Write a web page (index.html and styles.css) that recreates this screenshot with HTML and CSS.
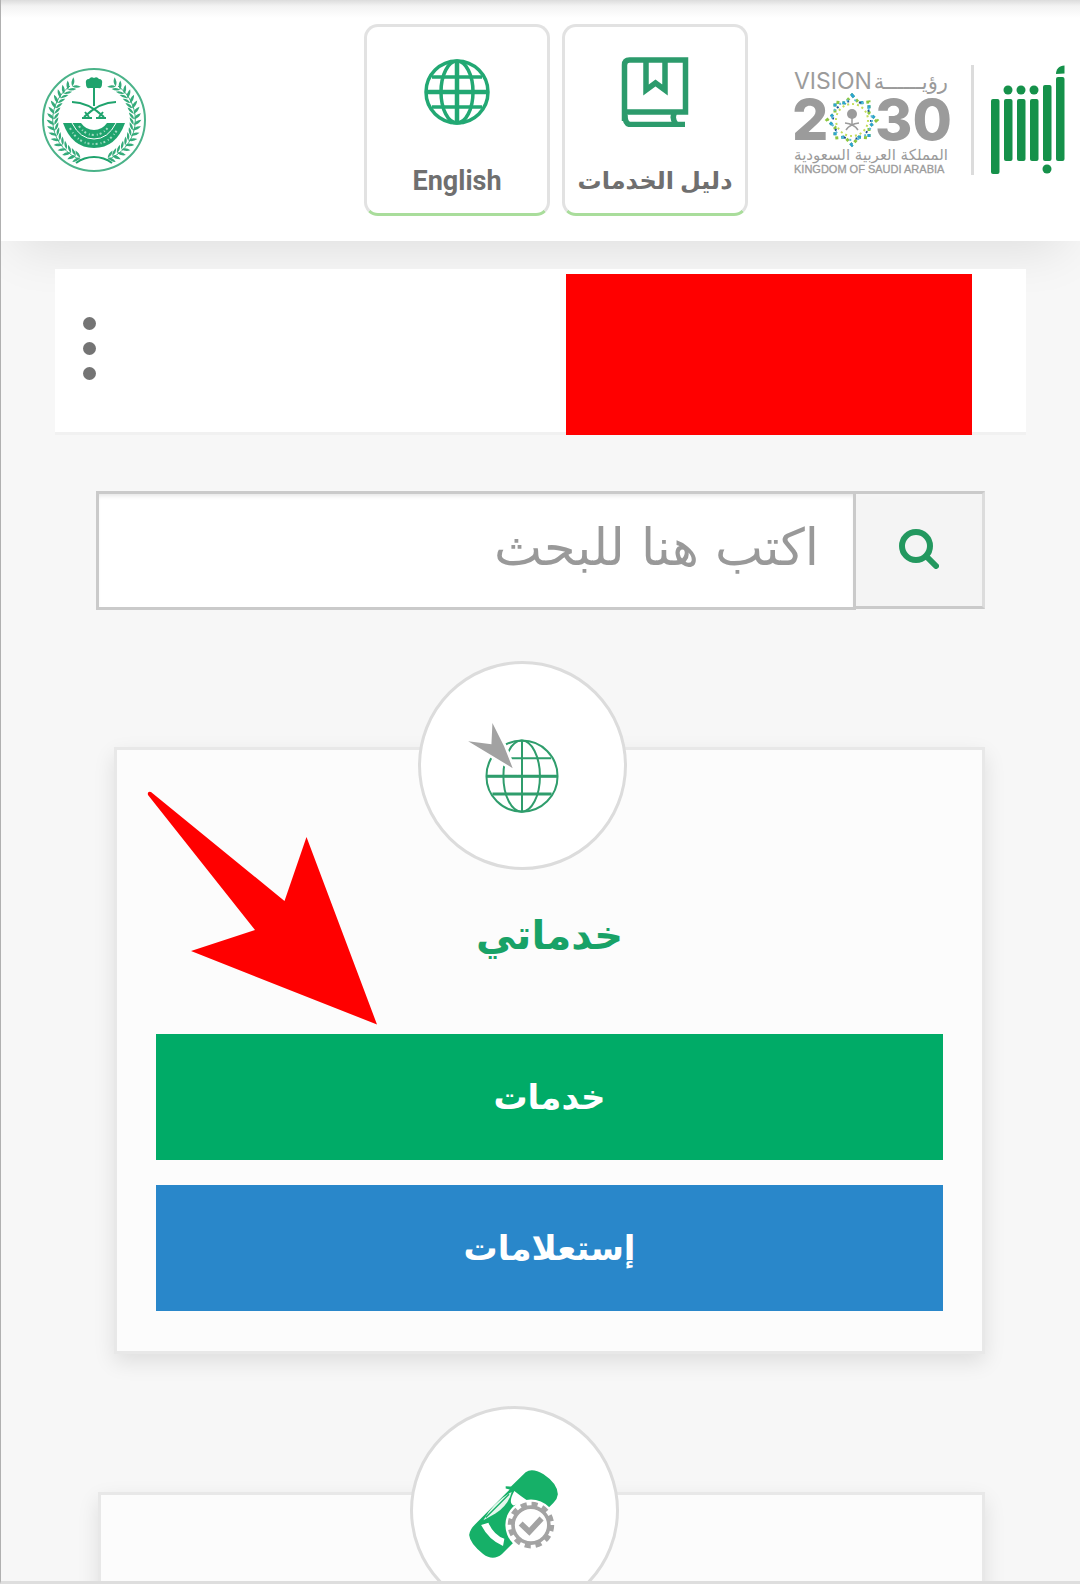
FILE: index.html
```html
<!DOCTYPE html>
<html lang="ar" dir="rtl">
<head>
<meta charset="utf-8">
<meta name="viewport" content="width=device-width, initial-scale=1">
<title>أبشر</title>
<link rel="stylesheet" href="styles.css">
</head>
<body>
<div class="page">
  <header class="header">
    <div class="brand">
      <svg class="absher" viewBox="0 0 74 110" role="img" aria-label="أبشر">
        <g fill="#15914a">
          <rect x="0" y="34" width="8.500" height="75" rx="2"/>
          <rect x="13" y="34" width="8.500" height="62" rx="2"/>
          <rect x="26" y="34" width="8.500" height="62" rx="2"/>
          <rect x="39" y="34" width="8.500" height="62" rx="2"/>
          <rect x="52" y="20" width="8.500" height="76" rx="2"/>
          <rect x="65" y="12" width="8.500" height="84" rx="2"/>
          <circle cx="17" cy="25" r="4.500"/><circle cx="30" cy="25" r="4.500"/><circle cx="43" cy="25" r="4.500"/>
          <circle cx="56" cy="104" r="4.500"/>
          <path d="M65 9c0-5 3-8 8.500-8.500V8.500z"/>
        </g>
      </svg>
      <span class="brand-line"></span>
      <svg class="vision" viewBox="0 0 160 110" direction="ltr" role="img" aria-label="Vision 2030">
        <g fill="#9b9b9b">
          <text class="v-name" x="0" y="24">VISION</text>
          <text class="v-ar" x="154" y="24" direction="rtl">رؤيــــــة</text>
          <text class="v-num" x="-2" y="75">2</text>
          <text class="v-num" x="81" y="75">30</text>
          <text class="v-king-ar" x="154" y="95" direction="rtl">المملكة العربية السعودية</text>
          <text class="v-king" x="0" y="108">KINGDOM OF SAUDI ARABIA</text>
        </g>
        <g transform="translate(58 55)">
          <g fill="none" stroke-width="3">
            <path stroke="#8cc63f" stroke-dasharray="3 3" d="M0-25 7-17 17-18 17-7 25 0 17 7 17 18 7 17 0 25-7 17-17 18-17 7-25 0-17-7-17-18-7-17z"/>
            <path stroke="#2ba3d4" stroke-dasharray="3 9" d="M0-25 7-17 17-18 17-7 25 0 17 7 17 18 7 17 0 25-7 17-17 18-17 7-25 0-17-7-17-18-7-17z"/>
          </g>
          <g fill="none" stroke-width="2">
            <circle r="16" stroke="#c3dc5a" stroke-dasharray="2 3"/>
            <circle r="19" stroke="#1d4f91" stroke-dasharray="2 10"/>
            <circle r="20" stroke="#5bb9d8" stroke-dasharray="2 6"/>
          </g>
          <circle cy="-6" r="5" fill="#9b9b9b"/>
          <path d="M0-4V6M-7 3Q2 4 6 10M7 3Q-2 4-6 10" fill="none" stroke="#9b9b9b" stroke-width="1.500"/>
        </g>
      </svg>
    </div>
    <nav class="actions">
      <a class="tile tile-ar" href="#guide">
        <svg class="tile-icon" viewBox="0 0 72 72" fill="none" stroke="#2c9b6c" stroke-width="5.500" aria-hidden="true">
          <path d="M5.500 66V10q0-5 5-5H66.500V57H5.500M6 60q0 9 5 9.500H66M56 57q-4 6 1 12"/>
          <path d="M27 5V35L36.500 28 46 35V5"/>
        </svg>
        <span>دليل الخدمات</span>
      </a>
      <a class="tile" href="#english" lang="en">
        <svg class="tile-icon" viewBox="0 0 72 72" fill="none" stroke="#22a873" stroke-width="3.500" aria-hidden="true">
          <circle cx="36" cy="37" r="31"/><ellipse cx="36" cy="37" rx="16" ry="31"/>
          <path d="M36 6V68M5 37H67" stroke-width="4.500"/><path d="M11 22H61M11 52H61"/>
        </svg>
        <span>English</span>
      </a>
    </nav>
    <svg class="emblem" viewBox="0 0 104 104" role="img" aria-label="وزارة الداخلية">
      <defs>
        <g id="leaf"><path d="M0 0Q-5-1-7-6Q-1-5 0 0M0 0Q4-2 5-7Q0-5 0 0" fill="#35ab7b"/></g>
        <g id="branch">
          <path d="M40 92A42 42 0 0 1 28 18" fill="none" stroke="#35ab7b"/>
          <use href="#leaf" transform="rotate(-160 52 52) translate(52 12) rotate(90)"/>
          <use href="#leaf" transform="rotate(-153 52 52) translate(52 12) rotate(90)"/>
          <use href="#leaf" transform="rotate(-145 52 52) translate(52 12) rotate(90)"/>
          <use href="#leaf" transform="rotate(-137 52 52) translate(52 12) rotate(90)"/>
          <use href="#leaf" transform="rotate(-129 52 52) translate(52 12) rotate(90)"/>
          <use href="#leaf" transform="rotate(-121 52 52) translate(52 12) rotate(90)"/>
          <use href="#leaf" transform="rotate(-113 52 52) translate(52 12) rotate(90)"/>
          <use href="#leaf" transform="rotate(-105 52 52) translate(52 12) rotate(90)"/>
          <use href="#leaf" transform="rotate(-97 52 52) translate(52 12) rotate(90)"/>
          <use href="#leaf" transform="rotate(-89 52 52) translate(52 12) rotate(90)"/>
          <use href="#leaf" transform="rotate(-81 52 52) translate(52 12) rotate(90)"/>
          <use href="#leaf" transform="rotate(-73 52 52) translate(52 12) rotate(90)"/>
          <use href="#leaf" transform="rotate(-65 52 52) translate(52 12) rotate(90)"/>
          <use href="#leaf" transform="rotate(-57 52 52) translate(52 12) rotate(90)"/>
          <use href="#leaf" transform="rotate(-49 52 52) translate(52 12) rotate(90)"/>
          <use href="#leaf" transform="rotate(-41 52 52) translate(52 12) rotate(90)"/>
          <use href="#leaf" transform="rotate(-33 52 52) translate(52 12) rotate(90)"/>
        </g>
      </defs>
      <circle cx="52" cy="52" r="51" fill="none" stroke="#4bb389" stroke-width="2"/>
      <use href="#branch"/>
      <use href="#branch" transform="translate(104 0) scale(-1 1)"/>
      <g fill="none" stroke="#1fa36d" stroke-width="2">
        <path d="M52 18V38M30 34Q46 34 62 49M74 34Q58 34 42 49" />
        <path d="M34 95Q42 89 52 89T70 95M40 50H50M54 50H64M43 44l4 5M61 44l-4 5"/>
      </g>
      <path d="M52 10q3-2 5 1 4 0 3 5 0 5-4 4H48q-4 1-4-4-1-5 3-5 2-3 5-1z" fill="#1fa36d"/>
      <path d="M21 55H83Q74 80 52 80T21 55z" fill="#1fa36d"/>
      <path d="M30 55Q38 71 52 71T74 55" fill="none" stroke="#fff"/>
      <path d="M39 55Q44 62 52 62T65 55z" fill="#fff"/>
      <path d="M28 60Q36 76 52 76T76 60M37 58Q43 67 52 67T67 58" fill="none" stroke="#a6dcc4" stroke-width="2" stroke-dasharray="2 3 1 2"/>
    </svg>
  </header>

  <main>
    <section class="profile">
      <div class="profile-mask"></div>
      <button class="more" type="button" aria-label="المزيد"><i></i><i></i><i></i></button>
    </section>

    <form class="search" role="search">
      <button class="search-btn" type="submit" aria-label="بحث">
        <svg viewBox="0 0 40 40" fill="none" stroke="#23985f" stroke-linecap="round" aria-hidden="true">
          <circle cx="17" cy="17" r="14" stroke-width="6"/><path d="M28 28 37 37" stroke-width="6"/>
        </svg>
      </button>
      <input class="search-input" type="search" aria-label="بحث" placeholder="اكتب هنا للبحث">
    </form>

    <section class="card">
      <div class="badge-row"><div class="badge">
        <svg viewBox="200 188 330 316" aria-hidden="true">
          <g fill="none" stroke="#2f9d6c" stroke-width="6">
            <circle cx="365" cy="378" r="107"/><ellipse cx="364" cy="378" rx="55" ry="107"/>
            <path d="M365 271V485M278 324H453"/><path d="M258 378H472M276 432H454" stroke-width="9"/>
          </g>
          <path d="M203 273 273 282 276 218 311 288 337 354 273 315z" fill="#fff" stroke="#fff" stroke-width="16"/>
          <path d="M365 271V485M258 378H472" fill="none" stroke="#2f9d6c" stroke-width="6"/>
          <path d="M203 273 273 282 276 218 311 288 337 354 273 315z" fill="#a2a2a2"/>
        </svg>
      </div></div>
      <h2 class="card-title">خدماتي</h2>
      <div class="card-actions">
        <button class="btn btn-green" type="button">خدمات</button>
        <button class="btn btn-blue" type="button">إستعلامات</button>
      </div>
      <svg class="pointer" viewBox="0 0 231 235" aria-hidden="true">
        <path d="M4 1 137.500 110 159.500 46 230 233.500 44 160 108 139 1 4Q0 0 4 1z" fill="#f00"/>
      </svg>
    </section>

    <section class="card card-wide">
      <div class="badge-row"><div class="badge">
        <svg viewBox="236 203 330 316" aria-hidden="true">
          <path d="M266 435Q268 418 285 402L388 298 376 295V288L392 289 436 246Q456 232 490 252 532 280 533 312 532 325 520 338L365 492Q338 515 308 492 268 460 266 435z" fill="#16b068"/>
          <path d="M309 390Q340 335 394 305 384 345 345 370z" fill="#e6f7ed"/>
          <path d="M302 405 324 398Q340 435 372 446L368 468Q325 450 302 405zM402 302Q425 320 442 332L400 346Q382 338 402 302z" fill="#fff"/>
          <path d="M316 382 386 312" stroke="#16b068" stroke-width="4"/>
          <circle cx="452" cy="405" r="77" fill="#fff"/>
          <circle cx="452" cy="405" r="62" fill="none" stroke="#a3a3a3" stroke-width="16" stroke-dasharray="18 14.460"/>
          <circle cx="452" cy="405" r="54" fill="none" stroke="#a3a3a3" stroke-width="11"/>
          <path d="M421 400 447 425 484 385" fill="none" stroke="#a3a3a3" stroke-width="17"/>
        </svg>
      </div></div>
    </section>
  </main>
</div>
</body>
</html>
```

FILE: styles.css
```css
* { box-sizing: border-box; }

body {
  margin: 0;
  background: #f7f7f7;
  font-family: Roboto, "DejaVu Sans", sans-serif;
  color: #6f6f6f;
}

.page {
  height: 100vh;
  overflow: hidden;
  border-left: 1px solid #b0b0b0;
  border-bottom: 3px solid #dedede;
}

.header {
  display: flex;
  align-items: center;
  padding: 24px 15px 25px 41px;
  background: linear-gradient(#dcdcdc, #f3f3f3 6px, #fff 18px);
  box-shadow: 0 24px 48px -16px rgba(0, 0, 0, .1);
}

.brand { display: flex; align-items: center; gap: 17px; }
.absher { width: 74px; height: 110px; }
.brand-line { width: 3px; height: 110px; background: #dcdcdc; }
.vision { width: 160px; height: 110px; overflow: visible; }
.v-name { font: 23px Inter, sans-serif; }
.v-ar { font: 21px "DejaVu Sans", sans-serif; }
.v-num { font: 800 57px Inter, sans-serif; }
.v-king-ar { font: 15px "DejaVu Sans", sans-serif; }
.v-king { font: 11px "Liberation Sans", sans-serif; stroke: #9b9b9b; stroke-width: .3px; }

.actions { display: flex; gap: 12px; margin-inline-start: 46px; }
.tile {
  display: flex;
  flex-direction: column;
  align-items: center;
  width: 186px;
  height: 192px;
  padding-top: 28px;
  border: 3px solid #e2e2e2;
  border-bottom-color: #a9dd9b;
  border-radius: 14px;
  background: #fff;
  color: #6f6f6f;
  font-size: 27px;
  font-weight: 700;
  line-height: 40px;
  text-decoration: none;
  white-space: nowrap;
}
.tile-ar { font-size: 24px; }
.tile-icon { width: 72px; height: 72px; margin-bottom: 34px; }

.emblem { width: 104px; height: 104px; margin-inline-start: auto; }

.profile {
  display: flex;
  align-items: flex-start;
  justify-content: space-between;
  height: 166px;
  margin: 28px 54px 0;
  padding: 0 54px 0 28px;
  border-bottom: 3px solid #f1f1f1;
  background: #fff;
  position: relative;
}
.profile-mask { width: 406px; height: 161px; margin-top: 5px; background: #f00; }
.more {
  display: flex;
  flex-direction: column;
  gap: 12px;
  margin-top: 48px;
  padding: 0;
  border: 0;
  background: none;
}
.more i { width: 13px; height: 13px; border-radius: 50%; background: #747474; }

.search { display: flex; align-items: flex-start; margin: 56px 95px 0; }
.search-btn {
  width: 129px;
  height: 118px;
  padding: 0;
  border: 3px solid #cacaca;
  border-right-color: #dcdcdc;
  border-left: 0;
  background: #f4f4f4;
}
.search-btn svg { width: 40px; height: 40px; }
.search-input {
  flex: 1;
  min-width: 0;
  height: 119px;
  padding: 0 34px 6px;
  border: 3px solid #cacaca;
  border-radius: 0;
  background: #fff;
  box-shadow: inset 0 4px 4px -2px rgba(0, 0, 0, .1);
  font: 51px "DejaVu Sans", sans-serif;
  outline: 0;
  appearance: none;
}
.search-input::placeholder { color: #999; opacity: 1; }

.card {
  position: relative;
  margin: 137px 95px 0 113px;
  padding: 0 39px 40px;
  border: 3px solid #e8e8e8;
  background: #fcfcfc;
  box-shadow: 0 8px 20px rgba(0, 0, 0, .1);
}
.card-wide { margin-top: 138px; margin-left: 97px; min-height: 600px; }
.badge-row { display: flex; justify-content: center; margin-top: -89px; padding-right: 55px; }
.badge {
  display: flex;
  align-items: center;
  justify-content: center;
  width: 209px;
  height: 209px;
  border: 3px solid #dcdcdc;
  border-radius: 50%;
  background: #fff;
}
.badge svg { width: 110px; height: 105px; }
.card-title {
  margin: 34px 0 66px;
  color: #18a267;
  font-size: 40px;
  line-height: 64px;
  text-align: center;
}
.card-actions { display: flex; flex-direction: column; gap: 25px; }
.btn {
  height: 126px;
  padding: 0;
  border: 0;
  color: #fff;
  font: 700 34px "DejaVu Sans", sans-serif;
}
.btn-green { background: #00ab67; }
.btn-blue { background: #2987ca; }

/* Arrow laid over the card, pointing at the services button */
.pointer { position: absolute; left: 30px; top: 41px; width: 231px; height: 235px; }
```
